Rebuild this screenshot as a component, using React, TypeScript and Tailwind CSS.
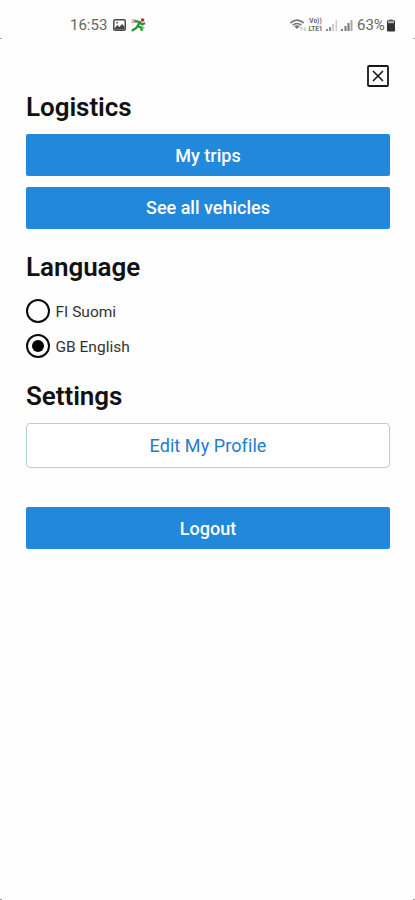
import React from "react";

const primary =
  "flex h-[42px] w-full items-center justify-center rounded-[2px] bg-[#2188dc] text-[18px] font-medium leading-none text-white";
const heading = "text-[26px] font-semibold leading-[30px] tracking-[-0.05px] text-[#111]";

function StatusBar() {
  return (
    <header className="flex h-[38px] shrink-0 items-center pl-[70px] pr-[20px] pt-[12px] text-[15px] leading-none text-[#666]">
      <span className="w-[37px] whitespace-nowrap pt-px">16:53</span>
      <svg className="ml-[6px]" width="13" height="12" viewBox="0 0 13 12">
        <rect x="0.75" y="0.75" width="11.5" height="10.5" rx="1.5" fill="#fff" stroke="#484848" strokeWidth="1.5" />
        <path d="M1.5 9.5 4.3 6l2 2L9 5l2.5 2.6V10.5H1.5Z" fill="#484848" />
        <circle cx="4" cy="3.6" r="0.9" fill="#484848" />
      </svg>
      <svg className="ml-[5px]" width="15" height="14" viewBox="0 0 15 14">
        <path d="M1 2.2h3M0.5 4.2h4" stroke="#e77" strokeWidth="1.3" />
        <circle cx="11.6" cy="2" r="1.8" fill="#c62b22" />
        <path d="M3.6 2.8 8.8 4.2 6.6 8 10.4 9.6 10.8 12.8M7 7.6 5 10.2 0.8 12.8M9 4.6 11.4 6.4 14 5" fill="none" stroke="#219530" strokeWidth="2.3" />
        <path d="M10.5 9.8h3M12 8.4v3" stroke="#6bbd6e" strokeWidth="1" />
      </svg>
      <div className="ml-auto flex items-center">
        <svg width="18" height="13" viewBox="0 0 18 13">
          <path d="M0.4 4Q7 -1.6 13.6 4M2.6 6.2Q7 2.8 11.4 6.2" fill="none" stroke="#777" strokeWidth="1.7" />
          <path d="M4.2 7.2Q7 5.5 9.8 7.2L7 10Z" fill="#777" />
          <path d="M11.3 11.5V8M10 9.5l1.3-1.5 1.3 1.5M14.8 8v3.5M13.5 10l1.3 1.5 1.3-1.5" fill="none" stroke="#bbb" strokeWidth="0.9" />
        </svg>
        <span className="flex w-[15px] flex-col text-center text-[6.5px] font-bold leading-[8px]">
          <span>Vo))</span>
          <span>LTE1</span>
        </span>
        <svg className="ml-[3px]" width="29" height="13" viewBox="0 0 29 13">
          <path d="M0 10h2v2H0zM3 8h2v4H3z" fill="#888" />
          <path d="M6 5h2v7H6zM9.5 1h1.5v11H9.5z" fill="#ccc" />
          <path d="M15 10h2v2h-2zM18.5 7h2v5h-2zM21.5 4h2v8h-2z" fill="#777" />
          <path d="M24.5 1h2v11h-2z" fill="#aaa" />
        </svg>
        <span className="ml-[2px] w-[30px] whitespace-nowrap pt-px">63%</span>
        <svg width="8" height="13" viewBox="0 0 8 13">
          <path d="M2.5 0h3v1.5h-3z" fill="#aaa" />
          <rect y="1.2" width="8" height="11.3" rx="1.2" fill="#333" />
          <path d="M1 2.2h6v2H1z" fill="#bbb" />
        </svg>
      </div>
    </header>
  );
}

function Radio({ label, checked = false }: { label: string; checked?: boolean }) {
  return (
    <div role="radio" aria-checked={checked} className="flex h-[24px] items-center gap-[5.5px] text-[15.5px] leading-none text-[#333]">
      <span className="flex size-[24px] items-center justify-center rounded-full border-2 border-[#0a0a0a]">
        {checked && <span className="size-[12px] rounded-full bg-black" />}
      </span>
      <span className="pt-[4px]">{label}</span>
    </div>
  );
}

export default function App() {
  return (
    <div className="flex h-[900px] w-[415px] flex-col bg-[#fefefe] font-[Roboto,sans-serif]">
      <StatusBar />
      <div className="flex h-px justify-between">
        <span className="w-[2px] bg-[#aaa]" />
        <span className="w-[2px] bg-[#aaa]" />
      </div>
      <main className="flex grow flex-col pl-[26px] pr-[25px] pt-[26px]">
        <button aria-label="Close" className="mr-px size-[22px] self-end">
          <svg width="22" height="22" viewBox="0 0 22 22" fill="none" stroke="#181818">
            <rect x="1" y="1" width="20" height="20" rx="1" strokeWidth="1.8" />
            <path d="M6 6 16 16M16 6 6 16" strokeWidth="1.6" />
          </svg>
        </button>
        <h1 className={`mt-[5px] ${heading}`}>Logistics</h1>
        <button className={`mt-[12px] pt-px ${primary}`}>My trips</button>
        <button className={`mt-[10.5px] pt-px ${primary}`}>See all vehicles</button>
        <h2 className={`mt-[23.5px] ${heading}`}>Language</h2>
        <div role="radiogroup" className="mt-[16.5px] flex flex-col gap-[11px]">
          <Radio label="FI Suomi" />
          <Radio label="GB English" checked />
        </div>
        <h2 className={`mt-[23.5px] ${heading}`}>Settings</h2>
        <button className="mt-[11.5px] flex h-[45px] w-full items-center justify-center rounded-[4px] border border-[#b3d0dc] bg-white pt-[2px] text-[18px] leading-none tracking-[0.08px] text-[#1f7ccb]">
          Edit My Profile
        </button>
        <button className={`mt-[39px] pt-[2px] ${primary}`}>Logout</button>
      </main>
      <div className="flex h-px justify-between">
        <span className="w-[2px] bg-[#999]" />
        <span className="w-[2px] bg-[#999]" />
      </div>
    </div>
  );
}
